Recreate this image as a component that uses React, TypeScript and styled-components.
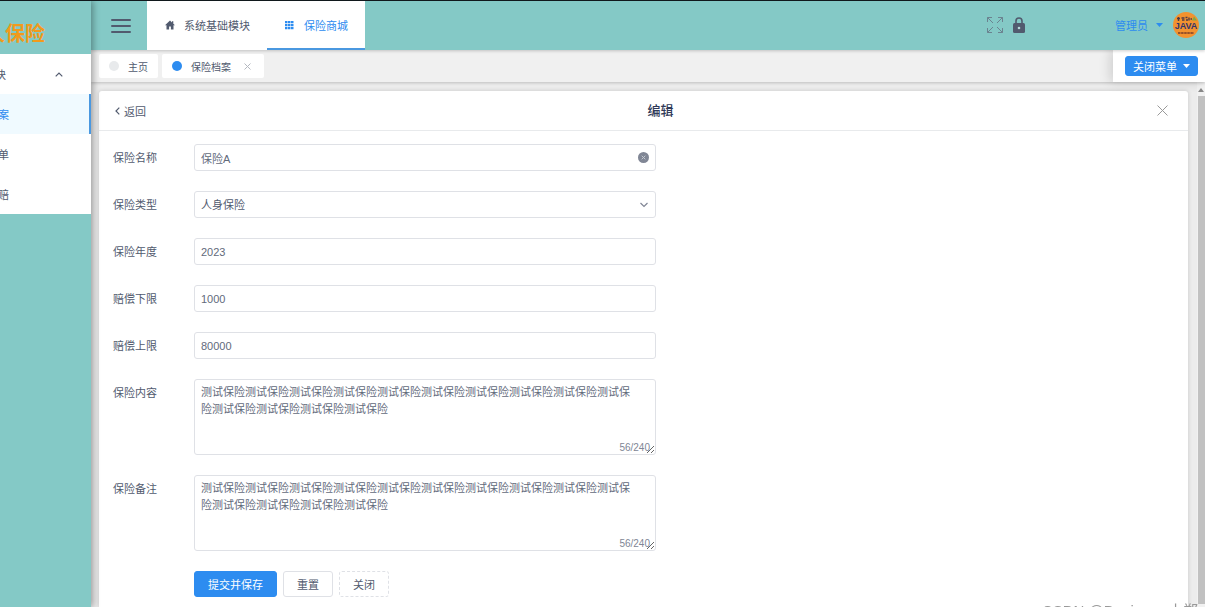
import React, { useState } from 'react';
import styled, { createGlobalStyle } from 'styled-components';

const blue = '#2d8cf0';
const teal = '#84c9c6';
const ink = '#515a6e';
const line = '#dfe1e6';

const GlobalStyle = createGlobalStyle`
  *, *::before, *::after { box-sizing: border-box; }
  body { margin: 0; overflow: hidden; }
  body, button, input, select, textarea {
    font-family: "Liberation Sans", "Noto Sans CJK SC", sans-serif;
    font-size: 11px;
    color: ${ink};
  }
  button { cursor: pointer; }
  svg { flex: none; }
`;

const Page = styled.div`
  display: flex;
  height: 100vh;
  border-top: 1px solid #10181c;
  background: #ececec;
  overflow: hidden;
`;

const Sidebar = styled.aside`
  flex: 0 0 91px;
  min-width: 0;
  background: ${teal};
  box-shadow: 2px 0 7px rgba(0, 0, 0, 0.35);
  z-index: 3;
`;

const Brand = styled.div`
  display: flex;
  align-items: center;
  justify-content: flex-end;
  height: 53px;
  padding: 12px 46px 0 0;
  overflow: hidden;
  white-space: nowrap;
  font-size: 20px;
  line-height: 20px;
  font-weight: 700;
  color: #f29a1c;
`;

const SideNav = styled.nav`
  display: flex;
  flex-direction: column;
  background: #fff;
  overflow: hidden;
`;

const SideHead = styled.button`
  display: flex;
  align-items: center;
  justify-content: flex-end;
  gap: 49px;
  height: 40px;
  padding: 0 28px 0 0;
  border: 0;
  background: #fff;
`;

const SideLink = styled.a<{ $active?: boolean }>`
  display: flex;
  align-items: center;
  justify-content: flex-end;
  height: 40px;
  padding-right: ${p => (p.$active ? 80 : 82)}px;
  border-right: ${p => (p.$active ? `2px solid #4a98e0` : '0')};
  background: ${p => (p.$active ? '#f0faff' : '#fff')};
  color: ${p => (p.$active ? blue : ink)};
  text-decoration: none;
`;

const Main = styled.div`
  flex: 1;
  min-width: 0;
  display: flex;
  flex-direction: column;
`;

const Header = styled.header`
  flex: 0 0 49px;
  display: flex;
  align-items: stretch;
  background: ${teal};
  z-index: 2;
  box-shadow: 0 1px 3px rgba(0, 0, 0, 0.2);
`;

const IconButton = styled.button`
  display: flex;
  align-items: center;
  justify-content: center;
  padding: 0;
  border: 0;
  background: transparent;
`;

const Toggle = styled(IconButton)`
  width: 56px;
  padding-left: 4px;
`;

const ModuleTab = styled.a<{ $active?: boolean }>`
  display: flex;
  align-items: center;
  gap: 8px;
  padding: 0 17px;
  background: #fff;
  border-bottom: 2px solid ${p => (p.$active ? '#4a98e0' : '#fff')};
  color: ${p => (p.$active ? blue : ink)};
  text-decoration: none;
`;

const Tools = styled.div`
  display: flex;
  align-items: center;
  gap: 10px;
  margin-left: auto;
  padding: 0 6px 2px 0;
`;

const UserButton = styled(IconButton)`
  gap: 8px;
  margin: 0 0 0 80px;
  color: ${blue};
`;

const TabStrip = styled.div`
  flex: 0 0 32px;
  display: flex;
  align-items: stretch;
  background: #f0f0f0;
  box-shadow: 0 1px 3px rgba(0, 0, 0, 0.2);
  z-index: 1;
`;

const PageTabs = styled.div`
  flex: 1;
  display: flex;
  align-items: center;
  gap: 4px;
  padding: 0 8px;
`;

const PageTab = styled.div`
  display: flex;
  align-items: center;
  gap: 9px;
  height: 24px;
  padding: 0 10px;
  border-radius: 2px;
  background: #fff;
  font-size: 10px;
`;

const TabClose = styled(IconButton)`
  width: 14px;
  height: 14px;
`;

const Dot = styled.span<{ $active?: boolean }>`
  width: 10px;
  height: 10px;
  border-radius: 50%;
  background: ${p => (p.$active ? blue : '#e8eaec')};
`;

const CloseMenuBox = styled.div`
  display: flex;
  align-items: center;
  padding: 0 7px 0 12px;
  background: #fff;
  box-shadow: -3px 0 12px rgba(0, 0, 0, 0.14);
`;

const Button = styled.button<{ $kind?: 'primary' | 'dashed'; $small?: boolean }>`
  display: flex;
  align-items: center;
  justify-content: center;
  gap: 6px;
  height: ${p => (p.$small ? 20 : 26)}px;
  padding: 0 ${p => (p.$small ? 7 : 13)}px;
  border: 1px ${p => (p.$kind === 'dashed' ? 'dashed' : 'solid')} ${p => (p.$kind === 'primary' ? blue : line)};
  border-radius: 3px;
  background: ${p => (p.$kind === 'primary' ? blue : '#fff')};
  color: ${p => (p.$kind === 'primary' ? '#fff' : ink)};
`;

const Body = styled.div`
  flex: 1;
  min-height: 0;
  display: flex;
`;

const Content = styled.main`
  flex: 1;
  min-width: 0;
  padding: 9px 9px 0 8px;
`;

const Card = styled.section`
  height: 100%;
  border-radius: 3px 3px 0 0;
  background: #fff;
  box-shadow: 0 0 4px rgba(0, 0, 0, 0.16);
`;

const CardHead = styled.div`
  display: grid;
  grid-template-columns: auto 1fr auto;
  align-items: center;
  height: 40px;
  padding: 0 20px 0 16px;
  border-bottom: 1px solid #e8eaec;
`;

const BackButton = styled(IconButton)`
  gap: 4px;
`;

const Title = styled.h1`
  margin: 0;
  padding-left: 18px;
  text-align: center;
  font-size: 13px;
  line-height: 20px;
  font-weight: 500;
  color: #303a58;
`;

const Form = styled.form`
  display: flex;
  flex-direction: column;
  gap: 20px;
  padding: 13px 14px 0;
`;

const Field = styled.div`
  display: grid;
  grid-template-columns: 81px minmax(0, 462px);
`;

const Label = styled.label`
  height: 27px;
  line-height: 29px;
`;

const Control = styled.div`
  position: relative;
  display: flex;
`;

const Input = styled.input`
  width: 100%;
  height: 27px;
  padding: 0 28px 0 6px;
  border: 1px solid ${line};
  border-radius: 3px;
  background: #fff;
  color: #626a7b;
  outline: 0;
`;

const Select = styled.select`
  width: 100%;
  height: 27px;
  padding: 0 28px 0 6px;
  border: 1px solid ${line};
  border-radius: 3px;
  background: #fff;
  appearance: none;
`;

const Suffix = styled.span`
  position: absolute;
  top: 0;
  right: 7px;
  display: flex;
  align-items: center;
  height: 27px;
  pointer-events: none;
`;

const ClearButton = styled(IconButton)`
  position: absolute;
  top: 0;
  right: 7px;
  height: 27px;
`;

const TextArea = styled.textarea`
  width: 100%;
  height: 76px;
  padding: 4px 18px 3px 6px;
  border: 1px solid ${line};
  border-radius: 3px;
  line-height: 17px;
  background: #fff;
  color: #626a7b;
  resize: vertical;
  outline: 0;
`;

const Counter = styled.span`
  position: absolute;
  right: 6px;
  bottom: 1px;
  font-size: 10px;
  line-height: 13px;
  color: #808695;
`;

const Actions = styled.div`
  display: flex;
  gap: 6px;
  padding-left: 81px;
`;

const ScrollTrack = styled.div`
  flex: 0 0 8px;
  display: flex;
  flex-direction: column;
  align-items: center;
  padding: 6px 0 3px;
  gap: 4px;
  background: #f1f1f1;
`;

const ScrollThumb = styled.div`
  flex: 1;
  align-self: stretch;
  margin-left: 1px;
  background: #c1c1c1;
`;

const Watermark = styled.div`
  position: fixed;
  right: 7px;
  bottom: -13px;
  z-index: 4;
  font-size: 15px;
  line-height: 18px;
  color: #999;
  white-space: nowrap;
`;

const Caret = ({ color }: { color: string }) => (
  <svg width="7" height="4" viewBox="0 0 7 4" aria-hidden="true"><path d="M0 0h7L3.500 4z" fill={color} /></svg>
);

const Cross = ({ size, color }: { size: number; color: string }) => (
  <svg width={size} height={size} viewBox={`0 0 ${size} ${size}`} fill="none" stroke={color} strokeWidth="1" aria-hidden="true">
    <path d={`M.5 .5L${size - 0.5} ${size - 0.5}M${size - 0.5} .5L.5 ${size - 0.5}`} />
  </svg>
);

const Avatar = () => (
  <svg width="26" height="26" viewBox="0 0 26 26" role="img" aria-label="JAVA">
    <circle cx="13" cy="13" r="13" fill="#f2922f" />
    <path d="M4 6.500h3M5.500 5v4M8.500 6h3M9 8h2.500M12.500 5.500h2M13 8h2M16 5.500v3M17.500 7h1.500" stroke="#4c3a48" strokeWidth="1.400" />
    <path d="M19 8.500l2-4 3 4z" fill="#8aa63c" />
    <text x="13" y="17" textAnchor="middle" fontSize="9" fontWeight="700" fill="#33346b">JAVA</text>
    <path d="M5 21h16" stroke="#7a3d28" strokeWidth="1.600" strokeDasharray="2.500 .6" />
  </svg>
);

const sample = '测试保险'.repeat(14);

function TextAreaField({ id, label }: { id: string; label: string }) {
  const [value, setValue] = useState(sample);
  return (
    <Field>
      <Label htmlFor={id}>{label}</Label>
      <Control>
        <TextArea id={id} maxLength={240} value={value} onChange={e => setValue(e.target.value)} />
        <Counter>{value.length}/240</Counter>
      </Control>
    </Field>
  );
}

function TextField({ id, label, initial, clearable }: { id: string; label: string; initial: string; clearable?: boolean }) {
  const [value, setValue] = useState(initial);
  return (
    <Field>
      <Label htmlFor={id}>{label}</Label>
      <Control>
        <Input id={id} value={value} onChange={e => setValue(e.target.value)} />
        {clearable && (
          <ClearButton type="button" aria-label="清空" onClick={() => setValue('')}>
            <svg width="11" height="11" viewBox="0 0 11 11" aria-hidden="true">
              <circle cx="5.500" cy="5.500" r="5.500" fill="#808695" />
              <path d="M3.700 3.700l3.600 3.600M7.300 3.700L3.700 7.300" stroke="#c3c8d0" strokeWidth="1" />
            </svg>
          </ClearButton>
        )}
      </Control>
    </Field>
  );
}

export default function App() {
  return (
    <>
      <GlobalStyle />
      <Page>
        <Sidebar>
          <Brand>人保险</Brand>
          <SideNav>
            <SideHead type="button">
              块
              <svg width="8" height="5" viewBox="0 0 8 5" fill="none" stroke={ink} strokeWidth="1.200" aria-hidden="true"><path d="M.7 4.300L4 1l3.300 3.300" /></svg>
            </SideHead>
            <SideLink href="#archive" $active>案</SideLink>
            <SideLink href="#order">单</SideLink>
            <SideLink href="#claim">赔</SideLink>
          </SideNav>
        </Sidebar>
        <Main>
          <Header>
            <Toggle type="button" aria-label="菜单">
              <svg width="20" height="14" viewBox="0 0 20 14" stroke={ink} strokeWidth="2" strokeLinecap="round" aria-hidden="true"><path d="M1 1h18M1 7h18M1 13h18" /></svg>
            </Toggle>
            <ModuleTab href="#system">
              <svg width="12" height="10" viewBox="0 0 12 10" fill={ink} aria-hidden="true"><path d="M6 .5L1 5.300h1.500V9.500h2.600V6.500h1.800v3h2.600V5.300H11L9.300 3.700V1.300H8v1.100z" /></svg>
              系统基础模块
            </ModuleTab>
            <ModuleTab href="#mall" $active>
              <svg width="12" height="10" viewBox="0 0 12 10" fill={blue} aria-hidden="true">
                <path d="M1 1h2.500v2.200H1zM4 1h2.500v2.200H4zM7 1h2.500v2.200H7zM1 4h2.500v2.200H1zM4 4h2.500v2.200H4zM7 4h2.500v2.200H7zM1 7h2.500v2.200H1zM4 7h2.500v2.200H4zM7 7h2.500v2.200H7z" />
              </svg>
              保险商城
            </ModuleTab>
            <Tools>
              <IconButton type="button" aria-label="全屏">
                <svg width="16" height="16" viewBox="0 0 16 16" fill="none" stroke="#6b8390" strokeWidth="1" aria-hidden="true">
                  <path d="M.5 5V.5H5M11 .5h4.500V5M15.500 11v4.500H11M5 15.500H.5V11M.5.5l5.500 5.500M15.500.5L10 6M15.500 15.500L10 10M.5 15.500L6 10" />
                </svg>
              </IconButton>
              <IconButton type="button" aria-label="锁屏">
                <svg width="12" height="16" viewBox="0 0 12 16" aria-hidden="true">
                  <path d="M3 6.500V4a3 3 0 016 0v2.500" fill="none" stroke={ink} strokeWidth="1.600" />
                  <rect y="6" width="12" height="10" rx="1.500" fill={ink} />
                  <circle cx="6" cy="11" r="1.300" fill="#b5d6d8" />
                </svg>
              </IconButton>
              <UserButton type="button">管理员<Caret color={blue} /></UserButton>
              <Avatar />
            </Tools>
          </Header>
          <TabStrip>
            <PageTabs>
              <PageTab><Dot />主页</PageTab>
              <PageTab>
                <Dot $active />保险档案
                <TabClose type="button" aria-label="关闭标签"><Cross size={7} color="#b4b8c0" /></TabClose>
              </PageTab>
            </PageTabs>
            <CloseMenuBox>
              <Button type="button" $kind="primary" $small>关闭菜单<Caret color="#fff" /></Button>
            </CloseMenuBox>
          </TabStrip>
          <Body>
            <Content>
              <Card>
                <CardHead>
                  <BackButton type="button">
                    <svg width="5" height="8" viewBox="0 0 5 8" fill="none" stroke={ink} strokeWidth="1.200" aria-hidden="true"><path d="M4.300.7L1 4l3.300 3.300" /></svg>
                    返回
                  </BackButton>
                  <Title>编辑</Title>
                  <IconButton type="button" aria-label="关闭"><Cross size={11} color="#999" /></IconButton>
                </CardHead>
                <Form onSubmit={e => e.preventDefault()}>
                  <TextField id="name" label="保险名称" initial="保险A" clearable />
                  <Field>
                    <Label htmlFor="type">保险类型</Label>
                    <Control>
                      <Select id="type" defaultValue="人身保险"><option>人身保险</option></Select>
                      <Suffix>
                        <svg width="10" height="6" viewBox="0 0 10 6" fill="none" stroke="#808695" strokeWidth="1.200" aria-hidden="true"><path d="M1.500 1L5 4.500 8.500 1" /></svg>
                      </Suffix>
                    </Control>
                  </Field>
                  <TextField id="year" label="保险年度" initial="2023" />
                  <TextField id="min" label="赔偿下限" initial="1000" />
                  <TextField id="max" label="赔偿上限" initial="80000" />
                  <TextAreaField id="content" label="保险内容" />
                  <TextAreaField id="remark" label="保险备注" />
                  <Actions>
                    <Button type="submit" $kind="primary">提交并保存</Button>
                    <Button type="reset">重置</Button>
                    <Button type="button" $kind="dashed">关闭</Button>
                  </Actions>
                </Form>
              </Card>
            </Content>
            <ScrollTrack>
              <svg width="6" height="4" viewBox="0 0 6 4" aria-hidden="true"><path d="M3 0l3 4H0z" fill="#888" /></svg>
              <ScrollThumb />
            </ScrollTrack>
          </Body>
        </Main>
        <Watermark>CSDN @Designer 小郑</Watermark>
      </Page>
    </>
  );
}
